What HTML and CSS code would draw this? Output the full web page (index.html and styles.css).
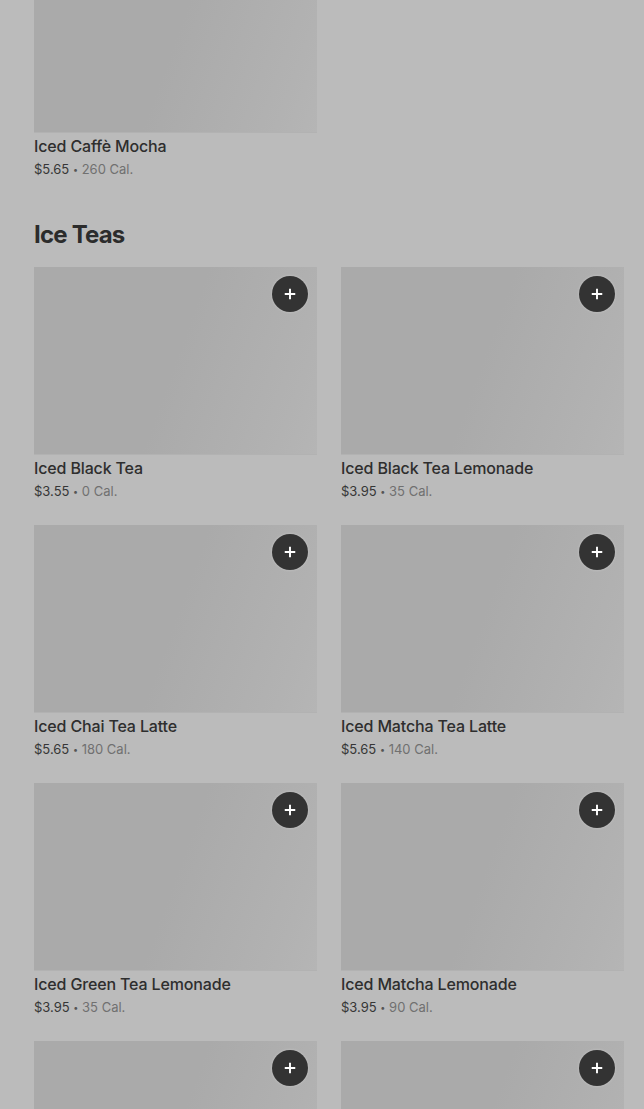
FILE: index.html
```html
<!DOCTYPE html>
<html lang="en">
<head>
<meta charset="utf-8">
<title>Menu</title>
<link rel="stylesheet" href="styles.css">
</head>
<body>
<div class="page">
  <div class="grid">
    <div class="card">
      <div class="img"></div>
      <div class="title">Iced Caffè Mocha</div>
      <div class="meta"><span class="price">$5.65</span> <span class="dot">•</span> <span class="cal">260 Cal.</span></div>
    </div>
  </div>

  <h2 class="section">Ice Teas</h2>

  <div class="grid">
    <div class="card">
      <div class="img"><button class="add"><svg viewBox="0 0 16 16" width="14" height="14"><path d="M8 2v12M2 8h12" stroke="#fff" stroke-width="2.2"/></svg></button></div>
      <div class="title">Iced Black Tea</div>
      <div class="meta"><span class="price">$3.55</span> <span class="dot">•</span> <span class="cal">0 Cal.</span></div>
    </div>
    <div class="card">
      <div class="img"><button class="add"><svg viewBox="0 0 16 16" width="14" height="14"><path d="M8 2v12M2 8h12" stroke="#fff" stroke-width="2.2"/></svg></button></div>
      <div class="title">Iced Black Tea Lemonade</div>
      <div class="meta"><span class="price">$3.95</span> <span class="dot">•</span> <span class="cal">35 Cal.</span></div>
    </div>
    <div class="card">
      <div class="img"><button class="add"><svg viewBox="0 0 16 16" width="14" height="14"><path d="M8 2v12M2 8h12" stroke="#fff" stroke-width="2.2"/></svg></button></div>
      <div class="title">Iced Chai Tea Latte</div>
      <div class="meta"><span class="price">$5.65</span> <span class="dot">•</span> <span class="cal">180 Cal.</span></div>
    </div>
    <div class="card">
      <div class="img"><button class="add"><svg viewBox="0 0 16 16" width="14" height="14"><path d="M8 2v12M2 8h12" stroke="#fff" stroke-width="2.2"/></svg></button></div>
      <div class="title">Iced Matcha Tea Latte</div>
      <div class="meta"><span class="price">$5.65</span> <span class="dot">•</span> <span class="cal">140 Cal.</span></div>
    </div>
    <div class="card">
      <div class="img"><button class="add"><svg viewBox="0 0 16 16" width="14" height="14"><path d="M8 2v12M2 8h12" stroke="#fff" stroke-width="2.2"/></svg></button></div>
      <div class="title">Iced Green Tea Lemonade</div>
      <div class="meta"><span class="price">$3.95</span> <span class="dot">•</span> <span class="cal">35 Cal.</span></div>
    </div>
    <div class="card">
      <div class="img"><button class="add"><svg viewBox="0 0 16 16" width="14" height="14"><path d="M8 2v12M2 8h12" stroke="#fff" stroke-width="2.2"/></svg></button></div>
      <div class="title">Iced Matcha Lemonade</div>
      <div class="meta"><span class="price">$3.95</span> <span class="dot">•</span> <span class="cal">90 Cal.</span></div>
    </div>
    <div class="card">
      <div class="img"><button class="add"><svg viewBox="0 0 16 16" width="14" height="14"><path d="M8 2v12M2 8h12" stroke="#fff" stroke-width="2.2"/></svg></button></div>
    </div>
    <div class="card">
      <div class="img"><button class="add"><svg viewBox="0 0 16 16" width="14" height="14"><path d="M8 2v12M2 8h12" stroke="#fff" stroke-width="2.2"/></svg></button></div>
    </div>
  </div>
</div>
</body>
</html>
```

FILE: styles.css
```css
html, body {
  margin: 0;
  padding: 0;
  background: #bbbbbb;
  height: 1109px;
  overflow: hidden;
}
body {
  font-family: Inter, "Noto Sans", "Liberation Sans", sans-serif;
  color: #2a2a2a;
}
.page {
  padding: 0 20px 0 34px;
  margin-top: -55px;
}
.grid {
  display: grid;
  grid-template-columns: 283px 283px;
  column-gap: 24px;
  row-gap: 24px;
}
.card {
  display: flex;
  flex-direction: column;
}
.img {
  position: relative;
  height: 188px;
  background: linear-gradient(110deg, #aaaaaa 0%, #aaaaaa 50%, #b2b2b2 88%, #b5b5b5 100%);
  border-bottom: 1px solid #b2b2b2;
  box-sizing: border-box;
}
.add {
  position: absolute;
  top: 9px;
  right: 9px;
  width: 36px;
  height: 36px;
  border-radius: 50%;
  border: none;
  padding: 0;
  background: #333333;
  display: flex;
  align-items: center;
  justify-content: center;
  box-shadow: 0 0 3px rgba(255,255,255,0.3);
}
.add svg { display: block; }
.title {
  margin-top: 3px;
  font-size: 16px;
  line-height: 20px;
  height: 20px;
  font-weight: 500;
  letter-spacing: -0.15px;
  color: #2e2e2e;
}
.meta {
  margin-top: 3px;
  font-size: 13px;
  line-height: 20px;
  height: 20px;
  color: #363636;
}
.dot {
  font-size: 9px;
  line-height: 10px;
  color: #555;
  vertical-align: 1px;
}
.cal { color: #707070; }
.section {
  margin: 40px 0 16px;
  font-size: 24px;
  line-height: 32px;
  font-weight: 700;
  letter-spacing: -0.8px;
  color: #2c2c2c;
}
```
